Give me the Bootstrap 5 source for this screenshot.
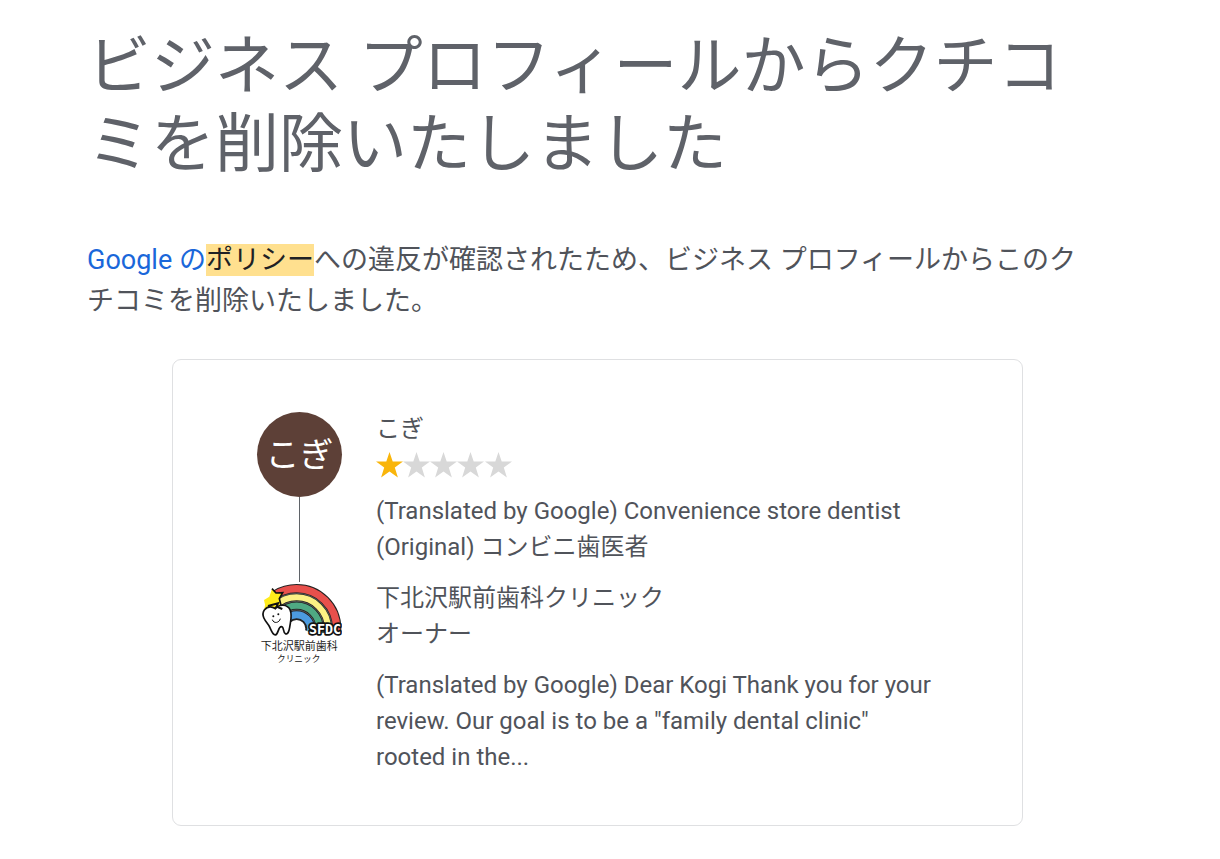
<!DOCTYPE html>
<html lang="ja">
<head>
<meta charset="utf-8">
<meta name="viewport" content="width=device-width, initial-scale=1">
<title>クチコミ削除のお知らせ</title>
<link href="https://cdn.jsdelivr.net/npm/bootstrap@5.3.0/dist/css/bootstrap.min.css" rel="stylesheet">
<style>
  body { font-family: Roboto, "Noto Sans CJK JP", sans-serif; color: #50535a; background: #fff; }
  .notice { max-width: 1220px; padding: 28px 112px 32px 87px; }
  .notice-title { font-size: 64px; line-height: 78px; font-weight: 400; color: #5f6269; margin-bottom: 56px; }
  .notice-text { font-size: 27px; line-height: 41px; margin-bottom: 37px; padding-right: 20px; }
  .notice-text a { color: #1a67da; }
  .notice-text .policy { background: #ffe08f; color: #202124; }
  .review { width: 851px; max-width: 100%; border: 1px solid #dfe0e2; border-radius: 9px; padding: 52px 80px 50px 84px; font-size: 24px; line-height: 36px; }
  .side { width: 85px; }
  .avatar { width: 85px; height: 85px; background: #5d4037; font-size: 34px; }
  .thread { width: 1px; height: 85px; background: #5f6368; }
  .review-body { margin-left: 34px; }
  .review-body p { margin-bottom: 15px; }
  .reviewer { line-height: 34px; }
  .stars { height: 39px; }
</style>
</head>
<body>
<main class="notice mx-auto">
  <h1 class="notice-title">ビジネス プロフィールからクチコミを削除いたしました</h1>
  <p class="notice-text"><a href="#" class="text-decoration-none">Google の</a><a href="#" class="policy text-decoration-none">ポリシー</a>への違反が確認されたため、ビジネス プロフィールからこのクチコミを削除いたしました。</p>
  <section class="review mx-auto d-flex">
    <div class="side flex-shrink-0 d-flex flex-column align-items-center">
      <div class="avatar rounded-circle text-white d-flex align-items-center justify-content-center">こぎ</div>
      <div class="thread"></div>
      <svg width="85" height="85" viewBox="21 36 255 255" role="img" aria-label="下北沢駅前歯科クリニック">
        <defs><clipPath id="arch"><path d="M70 33H276V190H190L110 160L88 100L70 66Z"/></clipPath></defs>
        <g clip-path="url(#arch)" fill="none">
          <circle cx="140" cy="176" r="80" stroke="#222" stroke-width="108"/>
          <circle cx="140" cy="176" r="120" stroke="#e8504c" stroke-width="22"/>
          <circle cx="140" cy="176" r="106" stroke="#bbb" stroke-width="1"/>
          <circle cx="140" cy="176" r="94" stroke="#fcf184" stroke-width="18"/>
          <circle cx="140" cy="176" r="82" stroke="#bbb" stroke-width="1"/>
          <circle cx="140" cy="176" r="69" stroke="#4fa983" stroke-width="19"/>
          <circle cx="140" cy="176" r="56" stroke="#bbb" stroke-width="1"/>
          <circle cx="140" cy="176" r="42" stroke="#4c9be0" stroke-width="21"/>
        </g>
        <path d="M66 56L78 69L98 68L88 86L94 112L66 114L42 124L45 104L42 90L58 80Z" fill="#ffec1c"/>
        <path d="M66 56L78 69L98 68L88 86L94 110" fill="none" stroke="#111" stroke-width="5"/>
        <path d="M43 120C53 108 65 109 76 116C88 101 112 103 120 119C128 137 121 157 119 172C117 184 113 195 106 191C98 186 103 170 94 170C84 170 86 192 76 195C65 193 64 178 56 166C46 153 32 136 43 120Z" fill="#fff" stroke="#111" stroke-width="5"/>
        <path d="M54 108L84 100L80 110L97 117M80 110L73 116" fill="none" stroke="#111" stroke-width="6"/>
        <path d="M67 149C71 162 88 159 91 146" fill="none" stroke="#111" stroke-width="3"/>
        <circle cx="70" cy="139" r="3" fill="#111"/><circle cx="85" cy="133" r="3" fill="#111"/>
        <text x="177" y="191" font-family="'DejaVu Sans Mono', monospace" font-weight="700" font-size="40" stroke="#111" stroke-width="10" stroke-linejoin="round" paint-order="stroke" fill="#fff">SFDC</text>
        <g font-family="'Noto Sans CJK JP', sans-serif" font-weight="400" fill="#222" text-anchor="middle">
          <text x="148" y="239" font-size="33">下北沢駅前歯科</text>
          <text x="146" y="277" font-size="26">クリニック</text>
        </g>
      </svg>
    </div>
    <div class="review-body flex-grow-1">
      <div class="reviewer">こぎ</div>
      <div class="stars d-flex align-items-center mb-2">
        <svg width="136" height="27" viewBox="0 0 136 27" role="img" aria-label="5 つ星のうち 1">
          <defs><path id="star" d="M13.5 0L16.7 9.5H27L18.8 15.6L21.9 25.4L13.5 19.4L5.1 25.4L8.2 15.6L0 9.5H10.3Z"/></defs>
          <use href="#star" fill="#f9b50b"/>
          <g fill="#d8d8d8"><use href="#star" x="27"/><use href="#star" x="54"/><use href="#star" x="81"/><use href="#star" x="109"/></g>
        </svg>
      </div>
      <p>(Translated by Google) Convenience store dentist (Original) コンビニ歯医者</p>
      <p>下北沢駅前歯科クリニック<br>オーナー</p>
      <p class="mb-0">(Translated by Google) Dear Kogi Thank you for your review. Our goal is to be a "family dental clinic" rooted in the...</p>
    </div>
  </section>
</main>
<script src="https://cdn.jsdelivr.net/npm/bootstrap@5.3.0/dist/js/bootstrap.bundle.min.js"></script>
</body>
</html>
